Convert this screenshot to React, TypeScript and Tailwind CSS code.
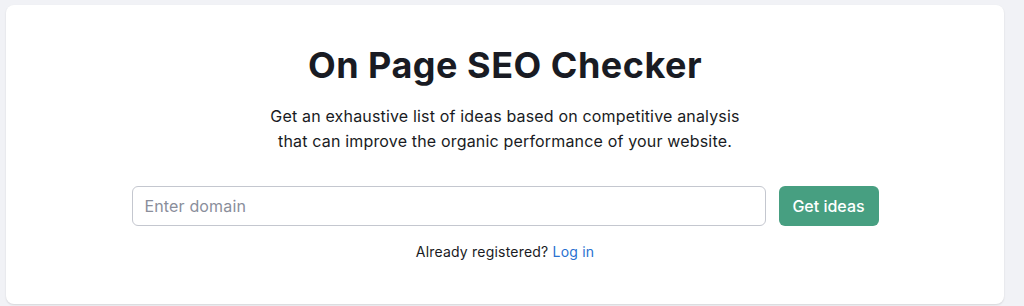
export default function App() {
  return (
    <div className="h-[306px] w-[1024px] bg-[#f1f2f6] pt-[5px] pl-[6px]" style={{ fontFamily: 'Inter, "Noto Sans", sans-serif' }}>
      <div className="flex w-[998px] flex-col items-center rounded-[8px] bg-white pt-[40px] pb-[42px] shadow-[0_1px_2px_rgba(0,0,0,0.12)]">
        <h1 className="text-[36px] leading-[40px] font-bold tracking-[0.5px] text-[#191b23]">On Page SEO Checker</h1>
        <p className="mt-[19px] text-center text-[16px] leading-[25px] tracking-[0.17px] text-[#191b23]">
          Get an exhaustive list of ideas based on competitive analysis
          <br />
          that can improve the organic performance of your website.
        </p>
        <div className="mt-[32px] flex gap-[13px]">
          <input
            type="text"
            placeholder="Enter domain"
            className="h-[40px] w-[634px] rounded-[6px] border border-[#c4c7cf] bg-white px-[12px] text-[16px] tracking-[0.15px] text-[#191b23] placeholder:text-[#8a8e9b] outline-none"
          />
          <button className="h-[40px] w-[100px] rounded-[6px] bg-[#479f81] text-[16px] font-medium text-white">Get ideas</button>
        </div>
        <div className="mt-[16px] text-[14px] leading-[20px] tracking-[0.2px] text-[#191b23]">
          Already registered? <a className="text-[#2a71d0]" href="#">Log in</a>
        </div>
      </div>
    </div>
  );
}
